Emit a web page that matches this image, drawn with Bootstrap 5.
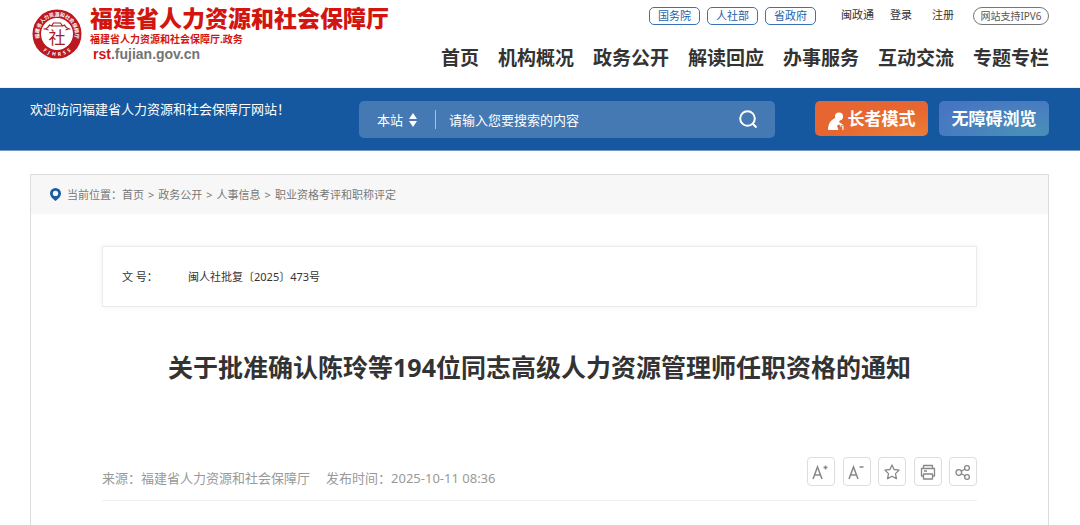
<!DOCTYPE html>
<html lang="zh-CN">
<head>
<meta charset="utf-8">
<meta name="viewport" content="width=device-width, initial-scale=1">
<title>福建省人力资源和社会保障厅</title>
<link href="https://cdn.jsdelivr.net/npm/bootstrap@5.3.0/dist/css/bootstrap.min.css" rel="stylesheet">
<style>
  body { font-family: "Noto Sans", "Noto Sans CJK SC", sans-serif; font-size: 11px; line-height: 16px; color: #333; }
  a { text-decoration: none; color: inherit; }
  .page-x { padding-left: 30px; padding-right: 31px; }
  .site-head { height: 88px; border-bottom: 1px solid #f0f0f0; }
  .brand-name { color: #d3150f; padding-top: 5px; }
  .brand-name strong { font-size: 23px; line-height: 27px; font-weight: 900; }
  .brand-sub { font-size: 10px; line-height: 15px; font-weight: 700; }
  .brand-url { font: 700 14px/15px "Liberation Sans", sans-serif; color: #747474; padding-left: 3px; }
  .brand-url b { color: #d3150f; }
  .quick { padding-top: 7px; }
  .quick-pills { gap: 7px; padding-right: 9px; }
  .quick-pill { width: 51px; height: 18px; line-height: 16px; border: 1px solid #3a72b5; border-radius: 5px; color: #2461aa; text-align: center; }
  .quick-round { width: 76px; height: 18px; line-height: 16px; font-size: 10px; border: 1px solid #777; border-radius: 9px; color: #555; text-align: center; margin-left: 19px; }
  .quick-text { margin-left: 16px; }
  .main-menu { font-size: 19px; line-height: 28px; font-weight: 700; gap: 19px; margin-top: 19px; }
  .blue-bar { background: #15589f; height: 63px; border-bottom: 1px solid #6f98c8; padding-top: 13px; color: #fff; font-size: 13px; }
  .blue-side { width: 329px; }
  .search-box { background: #4579b3; border-radius: 5px; height: 37px; width: 416px; padding: 0 17px 0 18px; font-size: 13px; }
  .search-box select, .search-box input, .search-box button { background: none; border: 0; color: #fff; padding: 0; outline-offset: 2px; }
  .search-box select { appearance: none; width: 32px; }
  .search-box input { margin-left: 13px; min-width: 0; }
  .search-box input::placeholder { color: #fff; opacity: 1; }
  .search-rule { width: 1px; height: 19px; background: #a9c1dd; margin-left: 18px; }
  .modes { gap: 11px; }
  .mode-btn { height: 35px; border: 0; border-radius: 5px; color: #fff; font-size: 17px; line-height: 24px; font-weight: 700; padding: 0; white-space: nowrap; }
  .mode-elder { width: 113px; background: radial-gradient(ellipse at 85% 110%, #ec8038 0, #e76530 60%); }
  .mode-access { width: 110px; background: radial-gradient(ellipse at 80% 85%, #4a90b8 0, #4775c2 85%); }
  .panel { margin: 23px 31px 0 30px; border: 1px solid #dcdcdc; border-bottom: 0; }
  .crumbs { background: #f7f7f7; height: 39px; padding-left: 19px; color: #777; gap: 6px; }
  .crumbs .breadcrumb { --bs-breadcrumb-divider: ">"; --bs-breadcrumb-font-size: 11px; --bs-breadcrumb-item-padding-x: 4px; --bs-breadcrumb-divider-color: #777; }
  .article { padding: 32px 71px 0; }
  .doc-box { height: 61px; border: 1px solid #ebebeb; box-shadow: 0 0 8px rgba(0,0,0,.05); padding: 0 19px; }
  .doc-label { width: 66px; white-space: pre; }
  .doc-title { font-size: 25px; line-height: 36px; font-weight: 700; margin: 42px 0 0; text-align: center; }
  .meta { margin-top: 72px; padding-bottom: 14px; border-bottom: 1px solid #f0f0f0; font-size: 13px; color: #999; }
  .meta-text { gap: 16px; padding-top: 13px; }
  .tools { width: 170px; }
  .tools button { width: 28px; height: 29px; padding: 0; border: 1px solid #ddd; border-radius: 4px; background: #fff; color: #888; }
</style>
</head>
<body>
<div class="d-flex flex-column min-vh-100">
  <header class="site-head page-x d-flex justify-content-between">
    <a href="#" class="d-flex">
      <svg class="flex-shrink-0" width="60" height="64" viewBox="0 0 60 64" role="img" aria-label="徽标">
        <defs>
          <path id="arcTop" d="M12 44A18 18 0 1 1 42 44"/>
          <path id="arcBottom" d="M6 39A21.500 21.500 0 0 0 48 39"/>
        </defs>
        <circle cx="27" cy="34" r="24.500" fill="#bb1820"/>
        <circle cx="27" cy="34" r="16" fill="#fff"/>
        <text font-size="5" font-weight="700" fill="#fff"><textPath href="#arcTop" startOffset="50%" text-anchor="middle">福建省人力资源和社会保障厅</textPath></text>
        <text font-size="5" font-weight="700" fill="#fff"><textPath href="#arcBottom" startOffset="50%" text-anchor="middle">F&#160; J&#160; H&#160; R&#160; S&#160; S</textPath></text>
        <path d="M14 29q4 0 6-4l2 1 2-3h7l2 3 2-1q2 4 6 4M19 30l-3-1M36 30l3-1M22 26h11" transform="translate(-.5)" fill="none" stroke="#9d2429" stroke-width="1.200"/>
        <text x="27" y="44" font-size="17" text-anchor="middle" fill="#a51c22">社</text>
      </svg>
      <span class="brand-name d-flex flex-column">
        <strong>福建省人力资源和社会保障厅</strong>
        <span class="brand-sub">福建省人力资源和社会保障厅.政务</span>
        <span class="brand-url"><b>rst</b>.fujian.gov.cn</span>
      </span>
    </a>
    <div class="d-flex flex-column align-items-end text-nowrap">
      <div class="quick d-flex">
        <span class="quick-pills d-flex">
          <a href="#" class="quick-pill">国务院</a>
          <a href="#" class="quick-pill">人社部</a>
          <a href="#" class="quick-pill">省政府</a>
        </span>
        <a href="#" class="quick-text">闽政通</a>
        <a href="#" class="quick-text">登录</a>
        <a href="#" class="quick-text ps-1">注册</a>
        <a href="#" class="quick-round">网站支持IPV6</a>
      </div>
      <nav class="main-menu d-flex">
        <a href="#">首页</a><a href="#">机构概况</a><a href="#">政务公开</a><a href="#">解读回应</a><a href="#">办事服务</a><a href="#">互动交流</a><a href="#">专题专栏</a>
      </nav>
    </div>
  </header>

  <div class="blue-bar page-x d-flex align-items-start">
    <div class="blue-side text-nowrap">欢迎访问福建省人力资源和社会保障厅网站！</div>
    <form class="search-box d-flex align-items-center">
      <select aria-label="搜索范围"><option>本站</option></select>
      <svg width="8" height="14" viewBox="0 0 8 14" fill="#fff" aria-hidden="true"><path d="M4 0l4 6H0zM4 14l4-6H0z"/></svg>
      <span class="search-rule"></span>
      <input class="flex-grow-1" type="text" placeholder="请输入您要搜索的内容" aria-label="搜索内容">
      <button type="submit" class="d-flex" aria-label="搜索">
        <svg width="19" height="19" viewBox="0 0 19 19" fill="none" stroke="#fff" stroke-width="2"><circle cx="8.500" cy="8.500" r="7.300"/><path d="M13.500 13.500l4 4"/></svg>
      </button>
    </form>
    <div class="modes d-flex ms-auto">
      <button type="button" class="mode-btn mode-elder d-flex align-items-center justify-content-center">
        <svg class="me-1 mt-1" width="16" height="18" viewBox="0 0 16 18" fill="#fff" aria-hidden="true"><circle cx="11" cy="4.500" r="4"/><path d="M7 6L4 8Q0 11 0 18h10.500L9 14l1.500-1.500 4 1.500 1-1-4.500-3 1-2zM12 13h3.500v5h-1.200v-3.500H12z"/></svg>长者模式</button>
      <button type="button" class="mode-btn mode-access">无障碍浏览</button>
    </div>
  </div>

  <main class="panel flex-grow-1">
    <nav class="crumbs d-flex align-items-center" aria-label="当前位置">
      <svg width="11" height="13" viewBox="0 0 11 13" aria-hidden="true"><path fill="#1c5ba3" fill-rule="evenodd" d="M5.500 0A5.500 5.500 0 0 1 11 5.500Q11 9 5.500 13 0 9 0 5.500A5.500 5.500 0 0 1 5.500 0zm0 2.700a2.700 2.700 0 1 0 0 5.400 2.700 2.700 0 0 0 0-5.400z"/></svg>
      <div class="d-flex">
        <span>当前位置：</span>
        <ol class="breadcrumb mb-0">
          <li class="breadcrumb-item"><a href="#">首页</a></li>
          <li class="breadcrumb-item"><a href="#">政务公开</a></li>
          <li class="breadcrumb-item"><a href="#">人事信息</a></li>
          <li class="breadcrumb-item"><a href="#">职业资格考评和职称评定</a></li>
        </ol>
      </div>
    </nav>
    <article class="article">
      <div class="doc-box d-flex align-items-center"><span class="doc-label">文 号：</span><span>闽人社批复〔2025〕473号</span></div>
      <h1 class="doc-title">关于批准确认陈玲等194位同志高级人力资源管理师任职资格的通知</h1>
      <div class="meta d-flex justify-content-between">
        <div class="meta-text d-flex"><span>来源：福建省人力资源和社会保障厅</span><span>发布时间：2025-10-11 08:36</span></div>
        <div class="tools d-flex justify-content-between">
          <button type="button" aria-label="放大字号"><svg width="18" height="18" viewBox="0 0 18 18" fill="none" stroke="currentColor" stroke-width="1.500"><path d="M1 16L5.500 4 10 16M2.600 12h5.800M11.500 4.500h4M13.500 2.500v4"/></svg></button>
          <button type="button" aria-label="缩小字号"><svg width="18" height="18" viewBox="0 0 18 18" fill="none" stroke="currentColor" stroke-width="1.500"><path d="M1 16L5.500 4 10 16M2.600 12h5.800M11.500 4h4"/></svg></button>
          <button type="button" aria-label="收藏"><svg width="18" height="18" viewBox="0 0 18 18" fill="none" stroke="currentColor" stroke-width="1.300" stroke-linejoin="round"><path d="M9 2l2.100 4.500 5 .6-3.600 3.500.9 5L9 13.200l-4.400 2.400.9-5L1.900 7.100l5-.6z"/></svg></button>
          <button type="button" aria-label="打印"><svg width="18" height="18" viewBox="0 0 18 18" fill="none" stroke="currentColor" stroke-width="1.300" stroke-linejoin="round"><path d="M4.500 5V2.500h9V5M4.500 13H2.500V5.500h13V13h-2M4.500 11h9v5h-9zM5 8h3"/></svg></button>
          <button type="button" aria-label="分享"><svg width="18" height="18" viewBox="0 0 18 18" fill="none" stroke="currentColor" stroke-width="1.300"><circle cx="4.800" cy="9.500" r="2.800"/><circle cx="13" cy="5" r="2.400"/><circle cx="13" cy="14" r="2.400"/><path d="M7.300 8.300L11 6M7.300 10.700l3.700 2"/></svg></button>
        </div>
      </div>
    </article>
  </main>
</div>
<script src="https://cdn.jsdelivr.net/npm/bootstrap@5.3.0/dist/js/bootstrap.bundle.min.js"></script>
</body>
</html>
